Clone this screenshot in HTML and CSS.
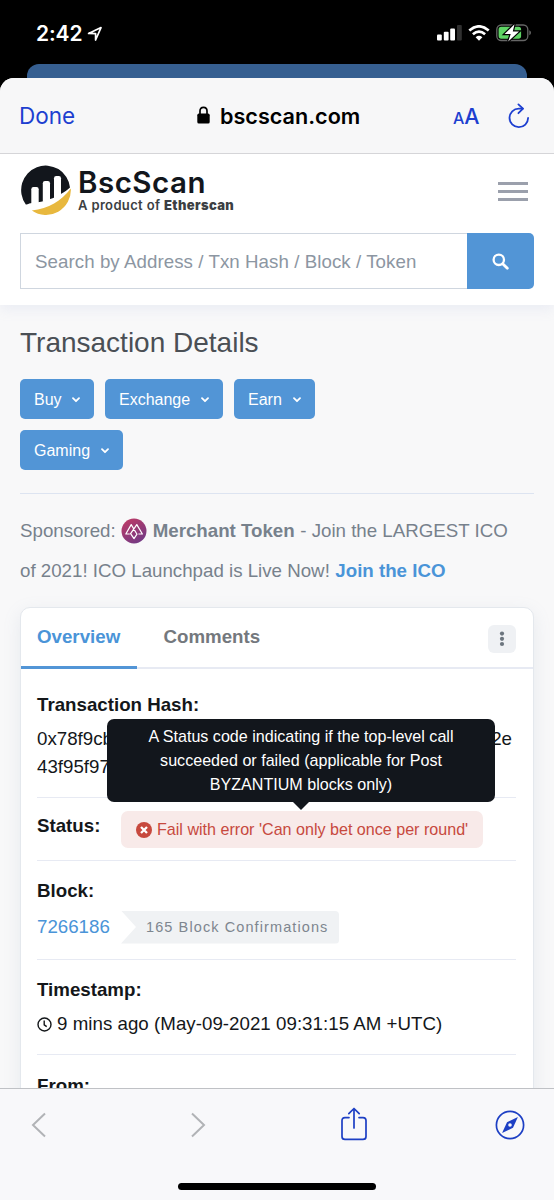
FILE: index.html
```html
<!DOCTYPE html>
<html lang="en">
<head>
<meta charset="utf-8">
<title>BscScan Transaction Details</title>
<link rel="stylesheet" href="styles.css">
</head>
<body>
<div class="phone">
  <header class="status-bar">
    <span class="clock">2:42</span>
    <svg class="loc" width="16" height="16" viewBox="0 0 16 16"><path d="M1.6 7.4 14 1.6 8.6 14V7.6Z" fill="none" stroke="#fff" stroke-width="1.7" stroke-linejoin="round"/></svg>
    <svg class="signal" width="25" height="16" viewBox="0 0 25 16"><g fill="#fff"><rect y="9.5" width="4.8" height="6" rx="1"/><rect x="6.8" y="6.7" width="4.8" height="8.8" rx="1"/><rect x="13.2" y="3.5" width="4.8" height="12" rx="1"/></g><rect x="20" y="0" width="4.8" height="15.5" rx="1" fill="#303030"/></svg>
    <svg class="wifi" width="22" height="16" viewBox="0 0 22 16"><g fill="none" stroke="#fff" stroke-width="2.7"><path d="M1.3 5.6Q11-2.9 20.7 5.6"/><path d="M4.9 9.3Q11 4 17.1 9.3"/></g><path d="M7.6 12.2Q11 9.3 14.4 12.2L11 15.7Z" fill="#fff"/></svg>
    <svg class="battery" width="36" height="18" viewBox="0 0 36 18"><rect x=".8" y="1" width="31" height="15.5" rx="4.5" fill="none" stroke="#666" stroke-width="1.3"/><rect x="2.6" y="2.8" width="22.5" height="11.9" rx="2.6" fill="#5fd465"/><path d="M33.3 6.3v5q1.7-.8 1.7-2.5t-1.7-2.5Z" fill="#666"/><path d="M18.5.2 8.6 10.1h6.1l-2.5 7.3L23 7.5h-6.2Z" fill="#fff" stroke="#000" stroke-width="2.4" paint-order="stroke"/></svg>
  </header>
  <div class="back-sheet"></div>
  <main class="sheet">
    <nav class="browser-nav">
      <span class="done">Done</span>
      <svg class="lock" width="13" height="18" viewBox="0 0 13 18"><rect x=".3" y="7.6" width="12.4" height="10" rx="1.6"/><path d="M3 8.5V5q0-3.7 3.5-3.7T10 5v3.5" fill="none" stroke="#000" stroke-width="1.7"/></svg>
      <span class="domain">bscscan.com</span>
      <span class="text-size"><small>A</small><span>A</span></span>
      <svg class="reload" width="22" height="26" viewBox="0 0 22 26" fill="none" stroke="#1d3fd0" stroke-width="1.8" stroke-linecap="round" stroke-linejoin="round"><path d="M14.8 5.6H10.8A9.3 9.3 0 1 0 20.1 15"/><path d="M10.4 1.4 15 5.7 10.4 10.2"/></svg>
    </nav>
    <div class="page">
      <section class="site-header">
        <div class="brand-row">
          <svg class="brand-mark" width="51" height="51" viewBox="0 0 51 51"><path d="M5.8 39.4A24.5 24.5 0 1 1 50 22.4C45 27 37 31.5 31 33.8 23 36.8 15 38 10.5 38.2 8.2 38.4 8 39.7 5.8 39.4Z" fill="#12161c"/><g fill="#fff"><path d="M11.3 39V24.2q0-2.2 2.2-2.2h3q2.2 0 2.2 2.2v14Z"/><path d="M22.8 37V18.2q0-2.2 2.2-2.2h2.8q2.2 0 2.2 2.2v17Z"/><path d="M34 33.6V13.2q0-2.2 2.2-2.2h2.6q2.2 0 2.2 2.2v17.5Z"/></g><path d="M11.8 45.4C29 43.6 41 36 50.8 23.4A24.8 24.8 0 0 1 11.8 45.4Z" fill="#e8b83e"/></svg>
          <div class="brand-copy"><div class="brand-name">BscScan</div><div class="brand-tag">A product of <b>Etherscan</b></div></div>
          <div class="menu"><i></i><i></i><i></i></div>
        </div>
        <div class="search">
          <div class="search-field"><span>Search by Address / Txn Hash / Block / Token</span></div>
          <div class="search-button"><svg width="17" height="17" viewBox="0 0 17 17" fill="none" stroke="#fff" stroke-width="2.3"><circle cx="6.8" cy="6.8" r="5.2"/><path d="m10.7 10.7 4.6 4.6" stroke-width="2.8" stroke-linecap="round"/></svg></div>
        </div>
      </section>
      <section class="content">
        <h1><span>Transaction Details</span></h1>
        <div class="actions">
          <div class="btn buy"><span>Buy</span><svg width="8" height="6" viewBox="0 0 8 6"><path d="m1 1.2 3 3 3-3"/></svg></div>
          <div class="btn exchange"><span>Exchange</span><svg width="8" height="6" viewBox="0 0 8 6"><path d="m1 1.2 3 3 3-3"/></svg></div>
          <div class="btn earn"><span>Earn</span><svg width="8" height="6" viewBox="0 0 8 6"><path d="m1 1.2 3 3 3-3"/></svg></div>
          <div class="btn gaming"><span>Gaming</span><svg width="8" height="6" viewBox="0 0 8 6"><path d="m1 1.2 3 3 3-3"/></svg></div>
        </div>
        <div class="sponsor">
          <div class="sponsor-line"><span>Sponsored:</span><svg class="merchant" width="26" height="26" viewBox="0 0 26 26"><defs><linearGradient id="mg" x1=".2" y1="0" x2=".8" y2="1"><stop stop-color="#bd3a66"/><stop offset="1" stop-color="#6f3a86"/></linearGradient></defs><circle cx="13" cy="13" r="12.5" fill="url(#mg)"/><path d="M8.8 16H4.8L10.2 6.6 16 16.2 13 20.6 9.6 15.6 15.8 6.6 21.4 16H17.4" fill="none" stroke="#fff" stroke-width="1.2" stroke-linejoin="round"/></svg><b>Merchant Token</b><span>- Join the LARGEST ICO</span></div>
          <div class="sponsor-line"><span>of 2021! ICO Launchpad is Live Now!</span><b class="join">Join the ICO</b></div>
        </div>
        <article class="card">
          <div class="tabs"><div class="tab active"><span>Overview</span></div><div class="tab comments"><span>Comments</span></div><div class="more"><svg width="6" height="16" viewBox="0 0 6 16" fill="#6c757e"><circle cx="3" cy="2.6" r="2.1"/><circle cx="3" cy="7.8" r="2.1"/><circle cx="3" cy="13" r="2.1"/></svg></div></div>
          <div class="row hash-row">
            <div class="label"><span>Transaction Hash:</span></div>
            <div class="hash"><span>0x78f9cb</span><span>2e</span></div>
            <div class="hash"><span>43f95f97</span></div>
          </div>
          <div class="row status-row">
            <div class="label"><span>Status:</span></div>
            <div class="fail"><svg width="16" height="16" viewBox="0 0 16 16"><circle cx="8" cy="8" r="8" fill="#c7493e"/><path d="m5 5 6 6m0-6-6 6" stroke="#fff" stroke-width="2.3"/></svg><span>Fail with error 'Can only bet once per round'</span>
              <div class="tooltip"><span>A Status code indicating if the top-level call</span><span>succeeded or failed (applicable for Post</span><span>BYZANTIUM blocks only)</span></div>
            </div>
          </div>
          <div class="row block-row">
            <div class="label"><span>Block:</span></div>
            <div class="block-line"><span class="number">7266186</span><div class="confirmations"><span>165 Block Confirmations</span></div></div>
          </div>
          <div class="row time-row">
            <div class="label"><span>Timestamp:</span></div>
            <div class="time-line"><svg width="15" height="15" viewBox="0 0 15 15" fill="none" stroke="#14171a" stroke-width="1.4"><circle cx="7.5" cy="7.5" r="6.5"/><path d="M7.2 3.5v4.3l2.5 1.8"/></svg><span>9 mins ago (May-09-2021 09:31:15 AM +UTC)</span></div>
          </div>
          <div class="row from-row"><div class="label"><span>From:</span></div></div>
        </article>
      </section>
    </div>
    <footer class="toolbar">
      <div class="tools">
        <svg class="back" width="16" height="26" viewBox="0 0 16 26"><path d="M14 1.5 2 13l12 11.5" fill="none" stroke="#b1b3b6" stroke-width="2"/></svg>
        <svg class="forward" width="16" height="26" viewBox="0 0 16 26"><path d="m2 1.5 12 11.5L2 24.5" fill="none" stroke="#b1b3b6" stroke-width="2"/></svg>
        <svg class="share" width="26" height="34" viewBox="0 0 26 34" fill="none" stroke="#1d3fc4" stroke-width="1.7" stroke-linecap="round" stroke-linejoin="round"><path d="M8 10.6H4q-3 0-3 3v15.8q0 3 3 3h18q3 0 3-3V13.6q0-3-3-3h-4"/><path d="M13 21V1.5M7.8 6.7 13 1.5l5.2 5.2"/></svg>
        <svg class="compass" width="30" height="30" viewBox="0 0 30 30"><circle cx="15" cy="15" r="13.6" fill="none" stroke="#1d3fc4" stroke-width="1.7"/><path d="M22.9 7 18 17.8 7.1 22.9 12 12.3Z" fill="#1d3fc4"/><circle cx="15" cy="15" r="1.8" fill="#f8f8fa"/></svg>
      </div>
      <div class="home-indicator"></div>
    </footer>
  </main>
</div>
</body>
</html>
```
FILE: styles.css
```css
* { box-sizing: border-box; }
body { margin: 0; background: #000; font-family: "Liberation Sans", Arial, sans-serif; font-size: 18.72px; color: #14171a; }
svg { display: block; flex: none; }
span, b { white-space: nowrap; }
.phone { width: 554px; height: 1200px; overflow: hidden; background: #000; }
.status-bar { height: 64px; padding-top: 25px; display: flex; align-items: flex-start; color: #fff; font-family: Inter, sans-serif; }
.clock { margin-left: 36px; width: 51px; font-size: 21px; line-height: 17px; font-weight: 600; letter-spacing: -.1px; }
.loc { margin-top: 1px; }
.signal { margin-left: 334px; }
.wifi { margin-left: 6px; }
.battery { margin-left: 6px; margin-top: -1px; }
.back-sheet { height: 14px; margin: 0 27px; background: #365f91; border-radius: 12px 12px 0 0; }
.sheet { height: 1122px; display: flex; flex-direction: column; background: #f8f8fa; border-radius: 14px 14px 0 0; overflow: hidden; }
.browser-nav { height: 76px; flex: none; display: flex; align-items: center; background: #f7f7f8; border-bottom: 1px solid #d5d5d8; font-family: Inter, sans-serif; }
.done { margin-left: 19px; width: 178px; color: #1d3fd0; font-size: 22.5px; }
.lock { margin-top: -1px; }
.domain { margin-left: 10px; width: 233px; font-weight: 600; font-size: 21.6px; color: #000; }
.text-size { display: flex; align-items: baseline; width: 55px; color: #1d3fd0; font-size: 21.5px; font-weight: 500; }
.text-size small { font-size: 16px; }
.page { height: 934px; flex: none; overflow: hidden; background: #f8f8f9; }
.site-header { height: 151px; background: #fff; padding: 11px 20px 0; box-shadow: 0 5px 12px rgba(150,165,210,.12); }
.brand-row { height: 51px; display: flex; }
.brand-mark { margin-left: 0; }
.brand-copy { margin-left: 7px; width: 420px; color: #12161c; font-family: Inter, sans-serif; }
.brand-name { padding-top: 1px; font-size: 29.5px; line-height: 33px; height: 34px; font-weight: 600; letter-spacing: .5px; }
.brand-tag { margin-top: -1px; font-size: 13px; line-height: 15px; font-weight: 600; color: #3c3f43; letter-spacing: .35px; }
.menu { width: 30px; padding-top: 17px; display: flex; flex-direction: column; gap: 5px; }
.menu i { height: 3px; background: #9ba0ac; }
.search { display: flex; height: 56px; margin-top: 17px; width: 514px; }
.search-field { width: 447px; border: 1px solid #cfd6df; border-right: 0; padding: 1px 0 0 14px; display: flex; align-items: center; color: #8c96a2; letter-spacing: .06px; }
.search-button { width: 67px; background: #5295d6; border-radius: 0 5px 5px 0; display: grid; place-items: center; }
.content { padding: 0 20px; }
h1 { margin: 0; height: 74px; padding-top: 22px; font-size: 28px; line-height: 32px; font-weight: 400; color: #4a4f55; }
.actions { display: flex; flex-wrap: wrap; gap: 11px; height: 115px; padding-right: 180px; align-content: flex-start; border-bottom: 1px solid #dde4f1; }
.btn { height: 40px; background: #5295d6; border-radius: 5px; color: #fff; font-size: 16px; padding: 1px 14px 0; display: flex; align-items: center; justify-content: space-between; }
.btn path { fill: none; stroke: #fff; stroke-width: 1.8; stroke-linecap: round; stroke-linejoin: round; }
.buy { width: 74px; } .exchange { width: 118px; } .earn { width: 81px; } .gaming { width: 103px; }
.sponsor { height: 113px; padding-top: 17px; color: #77818c; }
.sponsor-line { height: 40px; display: flex; align-items: center; gap: 5.5px; }
.sponsor-line b { font-weight: 700; }
.sponsor-line .join { color: #4a94d8; }
.card { height: 520px; background: #fff; border: 1px solid #e4e8ed; border-radius: 10px 10px 0 0; box-shadow: 0 5px 18px rgba(130,150,180,.14); }
.tabs { height: 61px; display: flex; border-bottom: 2px solid #e7eaf3; }
.tab { height: 61px; font-weight: 700; line-height: 57px; color: #74787d; }
.tab.active { width: 116px; padding-left: 16px; color: #4a94d8; border-bottom: 3px solid #5295d6; }
.comments { width: 351px; padding-left: 26.5px; }
.more { width: 28px; height: 28px; margin-top: 17px; border-radius: 6px; background: #eff1f4; display: grid; place-items: center; }
.row { margin: 0 17px 0 16px; border-bottom: 1px solid #e7eaf3; }
.label { font-weight: 700; height: 32px; line-height: 32px; }
.hash-row { height: 129px; padding-top: 20px; }
.hash { display: flex; justify-content: space-between; height: 28px; line-height: 28px; padding-right: 4px; }
.hash-row .label { height: 36px; }
.status-row { height: 63px; display: flex; }
.status-row .label { width: 84px; padding-top: 12px; }
.fail { position: relative; width: 362px; height: 37px; margin-top: 13px; border-radius: 7px; background: #f8eae9; color: #c7493e; font-size: 16.1px; display: flex; align-items: center; gap: 5px; padding-left: 15px; }
.tooltip { position: absolute; left: -14px; bottom: 46px; width: 388px; height: 83px; border-radius: 7px; background: #12161c; color: #fff; display: flex; flex-direction: column; align-items: center; padding-top: 5px; line-height: 24px; }
.tooltip::after { content: ""; position: absolute; top: 83px; left: 186px; border: 8px solid transparent; border-top-color: #12161c; border-bottom: 0; }
.block-row { height: 99px; padding-top: 14px; }
.block-line { display: flex; align-items: center; height: 32px; margin-top: 4px; }
.number { width: 84px; color: #4a94d8; }
.confirmations { width: 218px; height: 33px; padding-left: 25px; display: flex; align-items: center; border-radius: 0 4px 4px 0; background: #f0f2f4; clip-path: polygon(0 0,100% 0,100% 100%,0 100%,15px 50%); color: #7e868f; font-size: 14.5px; letter-spacing: 1.1px; }
.time-row { height: 95px; padding-top: 14px; }
.time-line { display: flex; align-items: center; gap: 5px; height: 36px; letter-spacing: .03px; }
.from-row { padding-top: 15px; border: 0; }
.toolbar { height: 112px; flex: none; background: #f8f8fa; border-top: 1px solid #bfc1c5; }
.tools { height: 72px; display: flex; align-items: center; }
.back { margin-left: 31px; } .forward { margin-left: 143px; } .share { margin-left: 135px; margin-top: -3px; } .compass { margin-left: 128px; }
.home-indicator { width: 198px; height: 7px; background: #000; border-radius: 4px; margin: 22px auto 0; }
```
